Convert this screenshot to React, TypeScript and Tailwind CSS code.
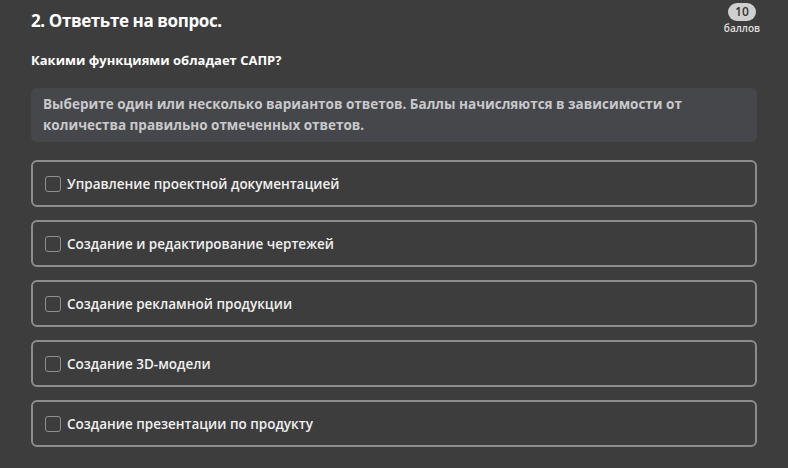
import { useState } from 'react';

const OPTIONS = [
  'Управление проектной документацией',
  'Создание и редактирование чертежей',
  'Создание рекламной продукции',
  'Создание 3D-модели',
  'Создание презентации по продукту',
];

export default function App() {
  const [checked, setChecked] = useState<boolean[]>(OPTIONS.map(() => false));

  const toggle = (index: number) => {
    setChecked((prev) => prev.map((value, i) => (i === index ? !value : value)));
  };

  return (
    <div
      className="min-h-[468px] w-full bg-[#3d3d3d] px-[31px] pt-[9px] text-[#ededed]"
      style={{ fontFamily: '"Open Sans", "Noto Sans", sans-serif' }}
    >
      <div className="flex items-start justify-between">
        <h2 className="text-[17px] font-bold leading-[24px] tracking-[-0.4px] text-white">2. Ответьте на вопрос.</h2>
        <div className="-mr-[3px] -mt-[6px] flex flex-col items-center">
          <span className="rounded-full bg-[#cfcfcf] px-[7px] text-[12px] font-semibold leading-[18px] text-[#333]">
            10
          </span>
          <span className="mt-[1px] text-[10px] font-semibold leading-[12px] text-[#e0e0e0]">баллов</span>
        </div>
      </div>

      <p className="mt-[16px] text-[13px] font-bold leading-[20px] text-white">Какими функциями обладает САПР?</p>

      <div className="mt-[18px] rounded-[6px] bg-[#46474a] px-[12px] py-[6px] text-[13.5px] font-bold leading-[21px] text-[#c9c9cc]">
        Выберите один или несколько вариантов ответов. Баллы начисляются в зависимости от количества правильно
        отмеченных ответов.
      </div>

      <div className="mt-[18px] flex flex-col gap-[13px]">
        {OPTIONS.map((label, index) => (
          <label
            key={label}
            className="flex h-[47px] cursor-pointer items-center gap-[6px] rounded-[6px] border-2 border-[#8c8c8c] px-[12px]"
          >
            <input
              type="checkbox"
              checked={checked[index]}
              onChange={() => toggle(index)}
              className="h-[16px] w-[16px] shrink-0 appearance-none rounded-[3px] border-[1.5px] border-[#8f8f8f] bg-transparent checked:bg-[#cfcfcf]"
            />
            <span className="text-[13.5px] font-semibold leading-[18px] text-[#f0f0f0]">{label}</span>
          </label>
        ))}
      </div>
    </div>
  );
}
